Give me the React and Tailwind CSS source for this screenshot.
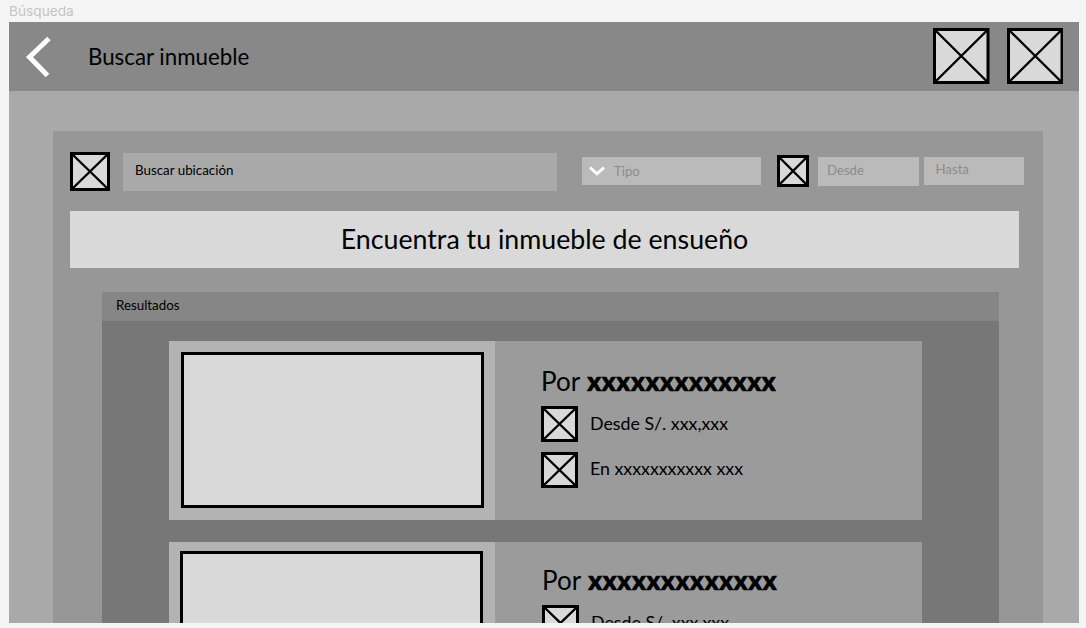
function CrossBox({ w, h, className = "" }) {
  return (
    <svg width={w} height={h} viewBox={`0 0 ${w} ${h}`} className={`shrink-0 ${className}`} fill="none" stroke="#000">
      <rect x="1.5" y="1.5" width={w - 3} height={h - 3} fill="#d9d9d9" strokeWidth="3" />
      <path d={`M2 2 L${w - 2} ${h - 2} M${w - 2} 2 L2 ${h - 2}`} strokeWidth="2.4" />
    </svg>
  );
}

function TopBar() {
  return (
    <header className="flex h-[69px] shrink-0 items-start bg-[#888888]">
      <svg width="26" height="42" viewBox="0 0 26 42" className="mt-[13.5px] ml-4 shrink-0" fill="none" stroke="#fff" strokeWidth="5">
        <path d="M24 2.5 L4.5 21 L22.5 39.5" />
      </svg>
      <h1 className="mt-[19px] ml-[37px] text-[22.3px] leading-8 whitespace-nowrap">Buscar inmueble</h1>
      <div className="mt-[6px] mr-[16px] ml-auto flex gap-[17px]">
        <CrossBox w={56.5} h={56} />
        <CrossBox w={56.5} h={56} />
      </div>
    </header>
  );
}

function Filters() {
  return (
    <div className="flex items-start pl-[17px] text-[13.2px]">
      <CrossBox w={40} h={39} className="mt-[21px]" />
      <div className="mt-[22px] ml-[13px] h-[38px] w-[434px] bg-[#a9a9a9] pl-[12px] text-[13.35px] leading-[35px]">Buscar ubicación</div>
      <div className="mt-[25.5px] ml-[25px] flex h-[28.5px] w-[179px] items-center bg-[#bababa] text-[#8c8c8c]">
        <svg width="16" height="10" viewBox="0 0 16 10" className="mt-px ml-[7px]" fill="none" stroke="#fff" strokeWidth="3">
          <path d="M1 1.5 L8 7.8 L15 1.5" />
        </svg>
        <span className="ml-[9px] pt-[2px]">Tipo</span>
      </div>
      <CrossBox w={32} h={32} className="mt-[24px] ml-[16px]" />
      <div className="mt-[26px] ml-[8.5px] h-[28.5px] w-[101px] bg-[#bababa] pl-[9.5px] leading-[26px] text-[#8c8c8c]">Desde</div>
      <div className="mt-[25.5px] ml-[5px] h-[28.5px] w-[100.5px] bg-[#bababa] pl-[12px] leading-[25px] text-[#8c8c8c]">Hasta</div>
    </div>
  );
}

function ResultCard({ second }) {
  return (
    <article className="flex h-[179px] w-[753px] shrink-0 bg-[#9b9b9b]">
      <div className={second ? "w-[326px] bg-[#b3b3b3] pt-[9px] pl-[11px]" : "w-[326px] bg-[#b3b3b3] pt-[11px] pl-[12px]"}>
        <div className="h-[156px] w-[303px] border-[3px] border-black bg-[#d9d9d9]" />
      </div>
      <div className={second ? "-mt-[2px] pl-[47px]" : "pl-[46px]"}>
        <h2 className="mt-6 text-[26px] leading-8 whitespace-nowrap">
          Por <b className="ml-px font-black tracking-[0.72px] [-webkit-text-stroke:0.7px_black]">xxxxxxxxxxxxx</b>
        </h2>
        <div className="mt-[9px] flex items-start text-[17.8px] leading-[34px]">
          <CrossBox w={37} h={36} />
          <span className="ml-3">Desde S/. xxx,xxx</span>
        </div>
        <div className="mt-[10px] flex items-start text-[17.8px] leading-[33px]">
          <CrossBox w={37} h={36} />
          <span className="ml-3">En xxxxxxxxxxx xxx</span>
        </div>
      </div>
    </article>
  );
}

export default function App() {
  return (
    <div className="flex h-[628px] w-[1086px] flex-col overflow-hidden bg-[#f5f5f5] pl-[9px] font-['Lato',sans-serif] text-black">
      <div className="h-[22px] shrink-0 font-['Inter',sans-serif] text-[13.7px] leading-[23px] text-[#c4c4c4]">Búsqueda</div>
      <div className="flex h-[601px] w-[1070px] flex-col overflow-hidden bg-[#a9a9a9]">
        <TopBar />
        <main className="mt-10 ml-11 w-[990px] grow bg-[#979797]">
          <Filters />
          <div className="mt-[20px] ml-[17px] h-[56.5px] w-[949px] bg-[#d9d9d9] text-center text-[26.75px] leading-[56px]">
            Encuentra tu inmueble de ensueño
          </div>
          <section className="mt-[24.5px] ml-[49px] h-[332px] w-[897px] bg-[#777777]">
            <h3 className="h-[29px] bg-[#868686] pl-[14px] text-[13.35px] leading-[26px]">Resultados</h3>
            <div className="flex flex-col gap-[22px] pt-5 pl-[67px]">
              <ResultCard />
              <ResultCard second />
            </div>
          </section>
        </main>
      </div>
    </div>
  );
}
